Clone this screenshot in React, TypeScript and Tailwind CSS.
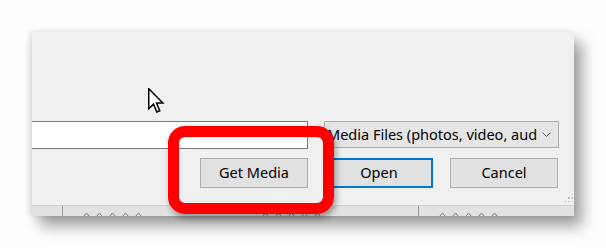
const font = { fontFamily: '"Noto Sans", "Segoe UI", sans-serif' }

const Chevron = ({ className }: { className?: string }) => (
  <svg className={className} width="9" height="6" viewBox="0 0 9 6" fill="none">
    <path d="M0.5 0.5 L4.5 4.5 L8.5 0.5" stroke="#606060" strokeWidth="1" />
  </svg>
)

const Cursor = () => (
  <svg width="17" height="25" viewBox="0 0 13.6 20" className="absolute left-[148px] top-[88px]">
    <path
      d="M0.6 0.6 L0.6 16.6 L4.4 12.9 L7.1 19.2 L9.4 18.2 L6.8 12 L11.9 12 Z"
      fill="#fff"
      stroke="#000"
      strokeWidth="1.2"
      strokeLinejoin="miter"
    />
  </svg>
)

const Ticks = () => (
  <div className="flex gap-[6px] pt-[6px] pl-[20px]">
    {[0, 1, 2, 3, 4].map((i) => (
      <svg key={i} width="7" height="5" viewBox="0 0 7 5">
        <path d="M0.5 4.5 L3.5 1 L6.5 4.5" stroke="#777" strokeWidth="1" fill="none" />
      </svg>
    ))}
  </div>
)

const Button = ({ label, primary }: { label: string; primary?: boolean }) => (
  <button
    className={`w-[108px] h-[30px] bg-[#e1e1e1] text-[14.5px] text-black flex items-center justify-center ${
      primary ? "border-2 border-[#0078d7]" : "border border-[#adadad]"
    }`}
  >
    {label}
  </button>
)

export default function App() {
  return (
    <div className="relative w-[606px] h-[248px] bg-[#fdfdfd] overflow-hidden" style={font}>
      <div className="pl-[32px] pt-[32px]">
        <div className="w-[542px] h-[184px] bg-[#f0f0f0] flex flex-col shadow-[8px_10px_14px_rgba(0,0,0,0.38),-2px_0_6px_rgba(0,0,0,0.12)]">
          <div className="h-[89px]" />
          {/* file name + filter row */}
          <div className="flex h-[28px] gap-[16px]">
            <div className="w-[276px] h-[28px] bg-white border border-l-0 border-[#7a7a7a] flex items-center justify-end pr-[7px]">
              <Chevron className="opacity-60" />
            </div>
            <div className="w-[235px] h-[27px] bg-[#e5e5e5] border border-[#adadad] flex items-center pl-[2px] pr-[7px]">
              <span className="flex-1 whitespace-nowrap text-[14.5px] text-black leading-none">
                Media Files (photos, video, aud
              </span>
              <Chevron className="ml-[4px] shrink-0" />
            </div>
          </div>
          {/* buttons */}
          <div className="flex justify-end gap-[17px] pr-[16px] mt-[9px]">
            <Button label="Get Media" />
            <Button label="Open" primary />
            <Button label="Cancel" />
          </div>
          <div className="flex justify-end pr-[1px] mt-[6px] h-[11px]">
            <div className="grid grid-cols-3 gap-[2px] w-[8px] h-[8px]">
              {[0, 0, 1, 0, 1, 1, 1, 1, 1].map((v, i) => (
                <div key={i} className={v ? "bg-[#bcbcbc]" : ""} />
              ))}
            </div>
          </div>
          {/* list header strip */}
          <div className="h-[11px] bg-[#e2e2e2] border-t border-[#d0d0d0] flex overflow-hidden">
            <div className="w-[31px] border-r border-[#9a9a9a]" />
            <div className="w-[179px] border-r border-[#d8d8d8]">
              <Ticks />
            </div>
            <div className="w-[177px] border-r border-[#9a9a9a]">
              <Ticks />
            </div>
            <div className="flex-1">
              <Ticks />
            </div>
          </div>
        </div>
      </div>

      <Cursor />

      {/* highlight */}
      <div className="absolute left-[168px] top-[126px] w-[166px] h-[88px] border-[11px] border-[#fe0000] rounded-[17px] shadow-[2px_4px_6px_rgba(0,0,0,0.35)]" />
    </div>
  )
}
